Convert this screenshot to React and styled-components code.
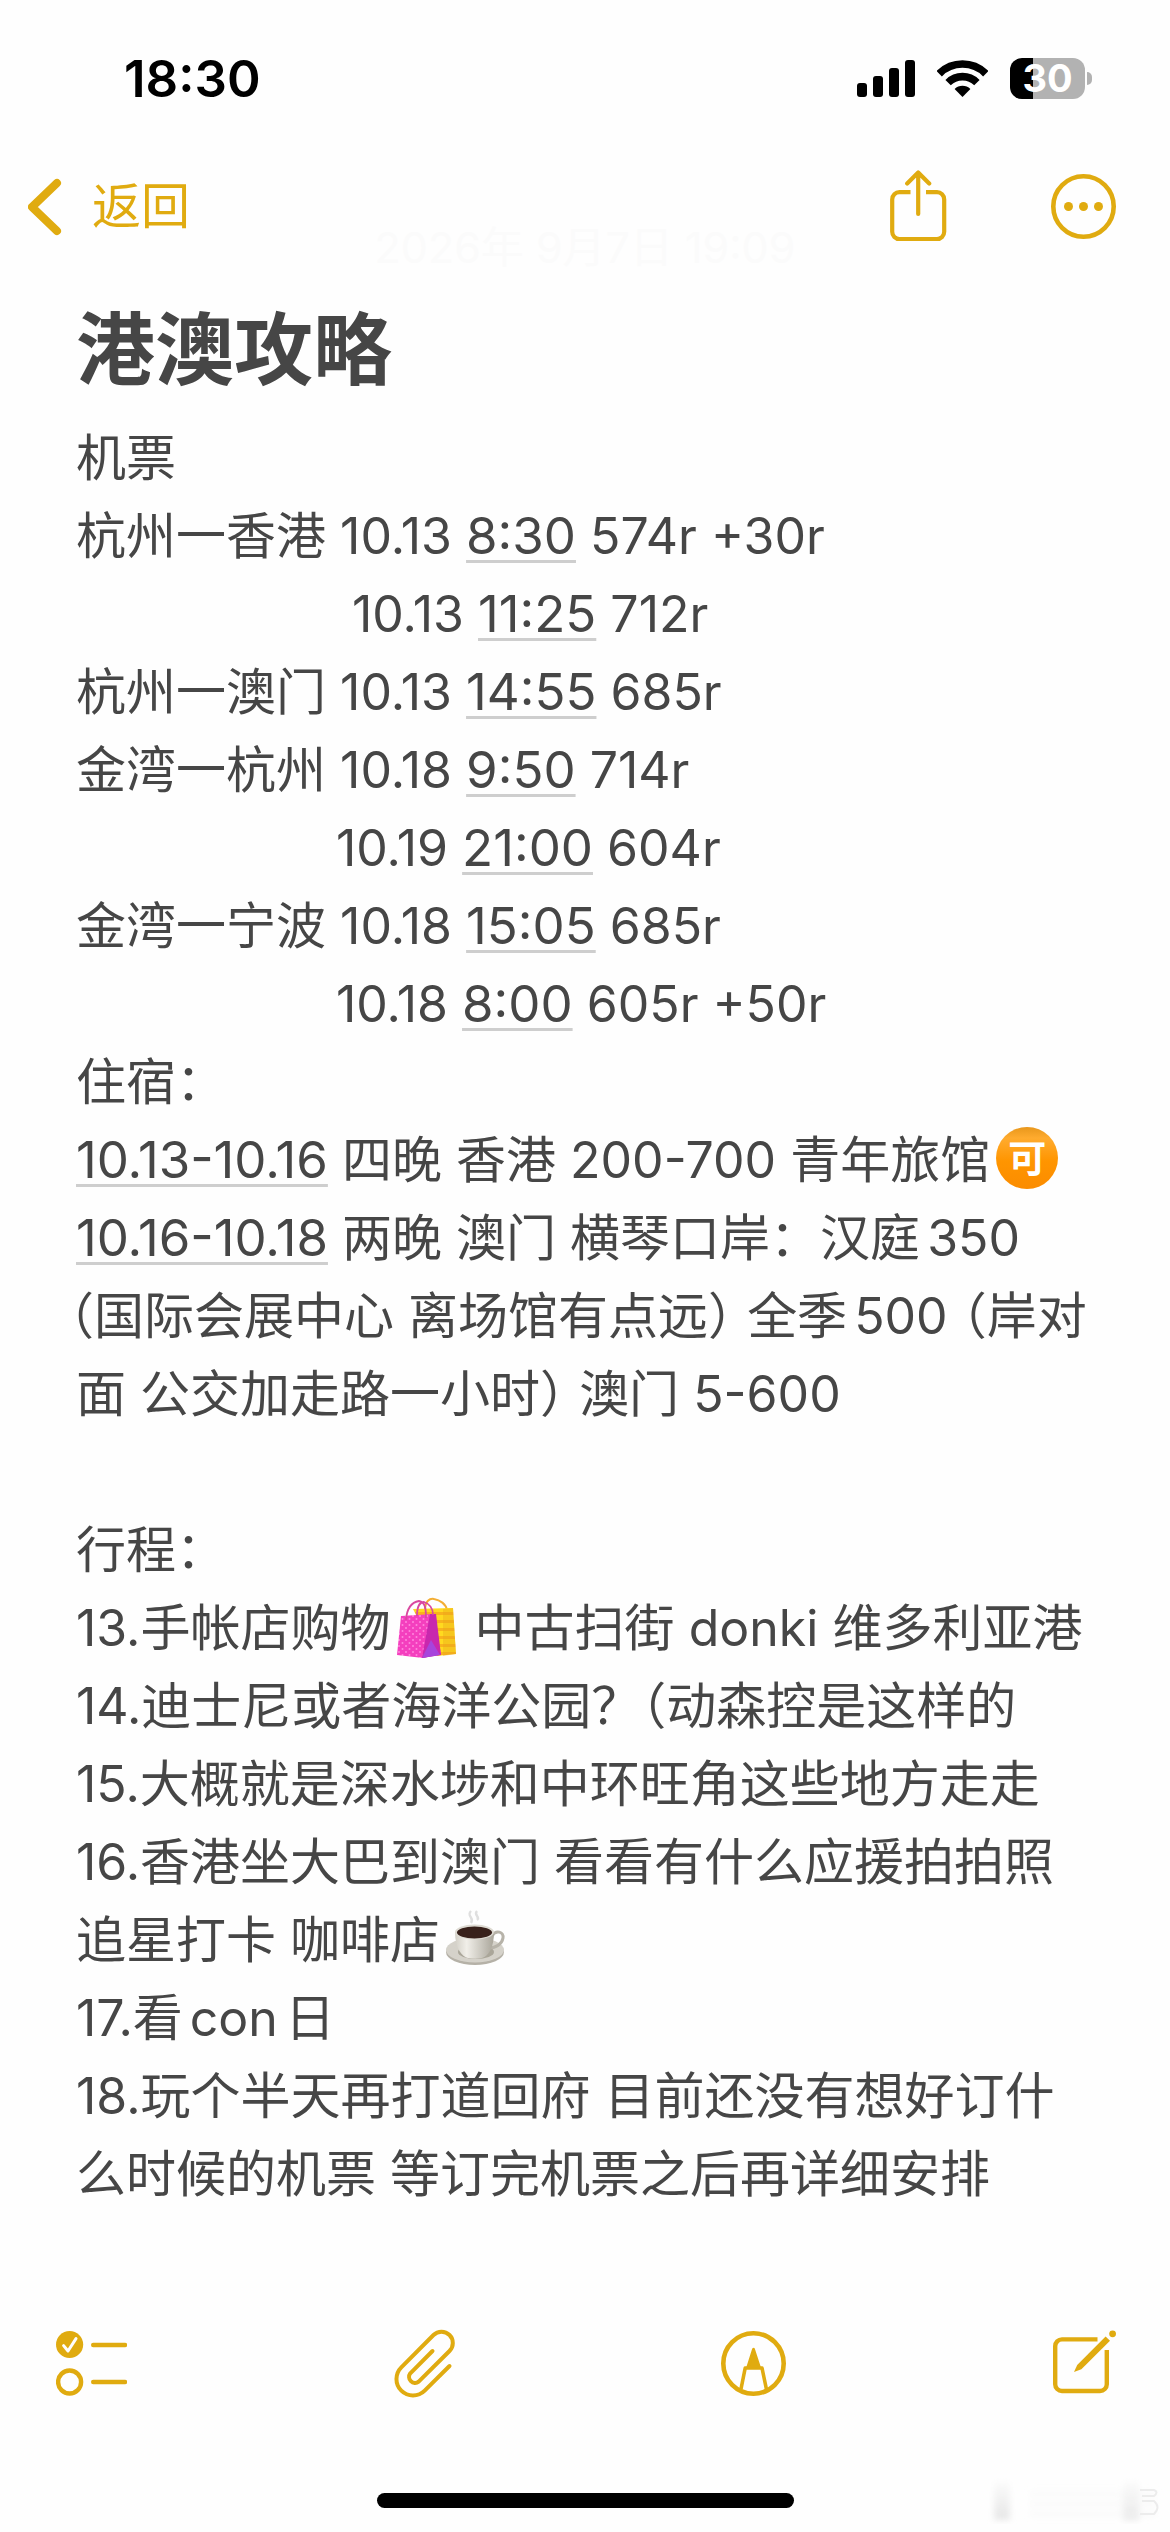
import styled, { createGlobalStyle, css } from "styled-components";

const GlobalStyle = createGlobalStyle`
    * {
        box-sizing: border-box;
    }
    body {
        margin: 0;
        background-color: #fefefe;
        font-family: Inter, "Noto Sans CJK SC", sans-serif;
    }
`
const Screen = styled.div`
    position: relative;
    display: flex;
    flex-direction: column;
    min-height: 100vh;
    color: #464646;
`
const StatusBar = styled.header`
    display: flex;
    align-items: center;
    justify-content: space-between;
    height: 156px;
    padding: 0 78px 0 124px;
    color: black;
`
const Time = styled.time`
    font-size: 51px;
    font-weight: 600;
`
const StatusIcons = styled.div`
    display: flex;
    align-items: center;
    gap: 22px;
`
const Battery = styled.span`
    position: relative;
    display: flex;
    align-items: center;
    justify-content: center;
    width: 75px;
    height: 41px;
    margin-right: 7px;
    border-radius: 12px;
    background: linear-gradient(to right, #000 23px, #b2b2b2 23px);
    color: white;
    font-size: 38px;
    font-weight: 700;
    line-height: 41px;
    &::after {
        content: "";
        position: absolute;
        right: -7px;
        top: 14px;
        width: 5px;
        height: 13px;
        border-radius: 0 5px 5px 0;
        background-color: #b2b2b2;
    }
`
const NavBar = styled.nav`
    display: flex;
    align-items: center;
    justify-content: space-between;
    padding: 18px 54px 0 28px;
`
const NavActions = styled.div`
    display: flex;
    align-items: center;
    gap: 104px;
`
const IconBtn = styled.button`
    display: flex;
    align-items: center;
    gap: ${props => props.$gap || 0}px;
    height: 66px;
    padding: 0;
    border: none;
    background: none;
    color: #e0ab10;
    font-family: inherit;
    font-size: 49px;
    line-height: 66px;
    cursor: pointer;
    svg {
        display: block;
    }
`
const EditedDate = styled.p`
    margin: -15px 0 0;
    color: #fbfbfb;
    font-size: 43px;
    line-height: 44px;
    text-align: center;
`
const Note = styled.main`
    padding: 33px 76px 40px;
`
const Title = styled.h1`
    margin: 0 0 21px;
    font-size: 79px;
    font-weight: 700;
    line-height: 96px;
`
const Line = styled.p`
    margin: 0;
    height: 78px;
    padding-left: ${props => props.$indent || 0}px;
    font-size: 50px;
    line-height: 78px;
    white-space: pre;
`
const Detected = styled.a`
    color: inherit;
    font-size: 51px;
    line-height: 1;
    text-decoration: underline;
    text-decoration-color: #cecece;
    text-decoration-thickness: 3px;
    text-underline-offset: 6px;
    text-decoration-skip-ink: none;
`
const Half = styled.span`
    margin-left: ${props => props.$tight ? "-7px" : "0"};
    font-family: "Noto Sans CJK SC", sans-serif;
    font-feature-settings: "halt";
    line-height: 1;
`
const Latin = styled.span`
    margin: 0 7px;
`
const emojiBox = css`
    margin: 0 4px 0 6px;
    vertical-align: -14px;
`
const Stamp = styled.span`
    display: inline-flex;
    align-items: center;
    justify-content: center;
    width: 62px;
    height: 62px;
    border-radius: 50%;
    background: linear-gradient(#e8971c, #ffab2e 18%, #ff9500 55%, #fb8c00);
    color: white;
    font-size: 38px;
    font-weight: 700;
    line-height: 56px;
    ${emojiBox}
    vertical-align: 6px;
`
const EmojiSvg = styled.svg`
    ${emojiBox}
`
const Footer = styled.footer`
    margin-top: auto;
    padding-bottom: 24px;
`
const Toolbar = styled.div`
    display: flex;
    align-items: center;
    justify-content: space-between;
    padding: 0 53px 97px 56px;
`
const HomeIndicator = styled.div`
    width: 417px;
    height: 15px;
    margin: 0 auto;
    border-radius: 8px;
    background-color: black;
`
const Smudge = styled.svg`
    position: absolute;
    right: 0;
    bottom: 0;
`

function Signal(){
    return (
        <svg width="58" height="38" fill="currentColor">
            <rect x="0" y="24" width="10" height="14" rx="3" />
            <rect x="16" y="17" width="10" height="21" rx="3" />
            <rect x="32" y="9" width="10" height="29" rx="3" />
            <rect x="48" y="1" width="10" height="37" rx="3" />
        </svg>
    )
}

function Wifi(){
    return (
        <svg width="51" height="38" fill="none" stroke="currentColor">
            <path d="M2.2 14.7A33 33 0 0 1 48.8 14.7" strokeWidth="7.6" />
            <path d="M11.1 23.6A20.4 20.4 0 0 1 39.9 23.6" strokeWidth="7.6" />
            <path d="M25.5 38L17.6 29.9A11.4 11.4 0 0 1 33.4 29.9Z" fill="currentColor" stroke="none" />
        </svg>
    )
}

function BackIcon(){
    return (
        <svg width="34" height="58" fill="none" stroke="currentColor" strokeWidth="8" strokeLinecap="round" strokeLinejoin="round">
            <path d="M29 5L4 29L29 53" />
        </svg>
    )
}

function ShareIcon(){
    return (
        <svg width="57" height="74" fill="none" stroke="currentColor" strokeWidth="4.2" strokeLinecap="round" strokeLinejoin="round">
            <path d="M20.5 22.2H9.5A7.2 7.2 0 0 0 2.2 29.4V61.8A7.2 7.2 0 0 0 9.5 69H47A7.2 7.2 0 0 0 54.2 61.8V29.4A7.2 7.2 0 0 0 47 22.2H36" strokeLinecap="butt" />
            <path d="M28.2 3V44M17.2 13.6L28.2 2.6L39.2 13.6" />
        </svg>
    )
}

function MoreIcon(){
    return (
        <svg width="65" height="66" fill="currentColor">
            <circle cx="32.5" cy="32.5" r="30.2" fill="none" stroke="currentColor" strokeWidth="4.6" />
            <circle cx="17.5" cy="32.5" r="4.5" />
            <circle cx="32.5" cy="32.5" r="4.5" />
            <circle cx="47.5" cy="32.5" r="4.5" />
        </svg>
    )
}

function ChecklistIcon(){
    return (
        <svg width="71" height="66" fill="none" stroke="currentColor" strokeWidth="4.4" strokeLinecap="round" strokeLinejoin="round">
            <circle cx="13.6" cy="14.5" r="13.6" fill="currentColor" stroke="none" />
            <path d="M7.6 15.6L12 21L20 8.6" stroke="#fefefe" strokeWidth="3" />
            <circle cx="13.6" cy="52" r="11.5" />
            <path d="M37.2 15H69M37.2 52H69" />
        </svg>
    )
}

function ClipIcon(){
    return (
        <svg width="61" height="70" fill="none" stroke="currentColor" strokeWidth="4" strokeLinecap="round" strokeLinejoin="round">
            <path d="M55.5 38L30.7 62.7A16.5 16.5 0 0 1 7.3 39.3L39.5 7A11.3 11.3 0 0 1 55.5 23L24.7 53.7A6 6 0 0 1 16.3 45.3L38.5 23" />
        </svg>
    )
}

function MarkupIcon(){
    return (
        <svg width="65" height="65" fill="none" stroke="currentColor">
            <circle cx="32.5" cy="32.5" r="30.2" strokeWidth="4.6" />
            <path d="M20 58L24.2 37H41L45.4 58" strokeWidth="3.6" strokeLinejoin="round" />
            <path d="M32.5 18.4L26.8 36.5H38.4Z" fill="currentColor" strokeWidth="3" strokeLinejoin="round" />
        </svg>
    )
}

function ComposeIcon(){
    return (
        <svg width="64" height="66" fill="none" stroke="currentColor">
            <path d="M44.5 9.4H9A6.8 6.8 0 0 0 2.2 16.2V54.2A6.8 6.8 0 0 0 9 61H47A6.8 6.8 0 0 0 53.8 54.2V20" strokeWidth="4.4" />
            <path d="M21 42L24.2 35L52.6 6.4L57 10.8L28.4 39.2Z" fill="currentColor" stroke="none" />
            <circle cx="59.6" cy="3.8" r="3.4" fill="currentColor" stroke="none" />
        </svg>
    )
}

function Bags(){
    return (
        <EmojiSvg width="60" height="64" viewBox="0 0 60 64" role="img" aria-label="购物袋">
            <defs>
                <pattern id="dots" width="7" height="6" patternUnits="userSpaceOnUse">
                    <rect width="7" height="6" fill="#f43fbe" />
                    <circle cx="2" cy="2" r="1" fill="#ff86dd" />
                    <circle cx="5.5" cy="5" r="1" fill="#ff86dd" />
                </pattern>
                <pattern id="stripes" width="8" height="8" patternUnits="userSpaceOnUse">
                    <rect width="8" height="8" fill="#ffd91f" />
                    <rect width="8" height="3" fill="#f9b21c" />
                </pattern>
            </defs>
            <path d="M28 14C28 5 33 2 37 3C43 4 49 8 50 14" fill="none" stroke="#f3ae35" strokeWidth="2" />
            <path d="M16 13L56 12L59 58L40 60Z" fill="url(#stripes)" />
            <path d="M46 13L56 12L59 58L46 60Z" fill="#e5a21b" opacity="0.35" />
            <path d="M4 20L36 18L44 58L26 62L0 59Z" fill="url(#dots)" />
            <path d="M33 18L39 18L44 59L25 62Z" fill="#c828ae" />
            <path d="M34 44L43 59L25 62Z" fill="#a744dc" />
            <path d="M9 24C10 10 16 6 22 5C28 6 29 12 29 22M20 20C20 10 23 6 27 6C33 8 36 12 36 19" fill="none" stroke="#d9489f" strokeWidth="1.8" />
        </EmojiSvg>
    )
}

function Coffee(){
    return (
        <EmojiSvg width="60" height="64" viewBox="0 0 60 64" role="img" aria-label="咖啡">
            <defs>
                <linearGradient id="cup">
                    <stop offset="0" stopColor="#d3d0c7" />
                    <stop offset="0.3" stopColor="#f1efe9" />
                    <stop offset="1" stopColor="#a9a59a" />
                </linearGradient>
            </defs>
            <ellipse cx="29" cy="44" rx="29" ry="13" fill="#b5b1a7" />
            <ellipse cx="29" cy="42" rx="29" ry="12.5" fill="#d5d2ca" />
            <ellipse cx="30" cy="44" rx="18" ry="7" fill="#aaa699" />
            <path d="M46 28C50 21 58 24 57 30C56 36 50 40 43 40" fill="none" stroke="#b7b3a9" strokeWidth="3" />
            <path d="M9 24C9 40 16 49 22 50C27 51 32 51 36 50C43 48 48 39 48 24Z" fill="url(#cup)" />
            <ellipse cx="28.5" cy="24" rx="19.5" ry="7.5" fill="#dedbd3" />
            <ellipse cx="28.5" cy="24.5" rx="17.5" ry="6" fill="#38211b" />
            <path d="M25 15C29 10 20 8 25 3M31 12C35 9 27 7 31 3" fill="none" stroke="#c9c9c9" strokeWidth="2.4" opacity="0.6" />
        </EmojiSvg>
    )
}

function App(){
    return (
        <>
            <GlobalStyle />
            <Screen>
                <StatusBar>
                    <Time>18:30</Time>
                    <StatusIcons>
                        <Signal />
                        <Wifi />
                        <Battery>30</Battery>
                    </StatusIcons>
                </StatusBar>
                <NavBar>
                    <IconBtn $gap={30}>
                        <BackIcon />
                        返回
                    </IconBtn>
                    <NavActions>
                        <IconBtn aria-label="共享"><ShareIcon /></IconBtn>
                        <IconBtn aria-label="更多"><MoreIcon /></IconBtn>
                    </NavActions>
                </NavBar>
                <EditedDate>2026年 9月7日 19:09</EditedDate>
                <Note>
                    <Title>港澳攻略</Title>
                    <Line>机票</Line>
                    <Line>杭州一香港 10.13 <Detected href="#">8:30</Detected> 574r +30r</Line>
                    <Line $indent={276}>10.13 <Detected href="#">11:25</Detected> 712r</Line>
                    <Line>杭州一澳门 10.13 <Detected href="#">14:55</Detected> 685r</Line>
                    <Line>金湾一杭州 10.18 <Detected href="#">9:50</Detected> 714r</Line>
                    <Line $indent={260}>10.19 <Detected href="#">21:00</Detected> 604r</Line>
                    <Line>金湾一宁波 10.18 <Detected href="#">15:05</Detected> 685r</Line>
                    <Line $indent={260}>10.18 <Detected href="#">8:00</Detected> 605r +50r</Line>
                    <Line>住宿：</Line>
                    <Line><Detected href="#">10.13-10.16</Detected> 四晚 香港 200-700 青年旅馆<Stamp>可</Stamp></Line>
                    <Line><Detected href="#">10.16-10.18</Detected> 两晚 澳门 横琴口岸：汉庭<Latin>350</Latin></Line>
                    <Line><Half $tight>（</Half>国际会展中心 离场馆有点远<Half>）</Half> 全季<Latin>500</Latin> <Half $tight>（</Half>岸对</Line>
                    <Line>面 公交加走路一小时<Half>）</Half> 澳门 5-600</Line>
                    <Line />
                    <Line>行程：</Line>
                    <Line>13.手帐店购物<Bags /> 中古扫街 donki 维多利亚港</Line>
                    <Line>14.迪士尼或者海洋公园？<Half>（</Half>动森控是这样的</Line>
                    <Line>15.大概就是深水埗和中环旺角这些地方走走</Line>
                    <Line>16.香港坐大巴到澳门 看看有什么应援拍拍照</Line>
                    <Line>追星打卡 咖啡店<Coffee /></Line>
                    <Line>17.看<Latin>con</Latin>日</Line>
                    <Line>18.玩个半天再打道回府 目前还没有想好订什</Line>
                    <Line>么时候的机票 等订完机票之后再详细安排</Line>
                </Note>
                <Footer>
                    <Toolbar>
                        <IconBtn aria-label="核对清单"><ChecklistIcon /></IconBtn>
                        <IconBtn aria-label="附件"><ClipIcon /></IconBtn>
                        <IconBtn aria-label="标记"><MarkupIcon /></IconBtn>
                        <IconBtn aria-label="新建备忘录"><ComposeIcon /></IconBtn>
                    </Toolbar>
                    <HomeIndicator />
                </Footer>
                <Smudge width="190" height="62" aria-hidden="true">
                    <defs>
                        <filter id="soft"><feGaussianBlur stdDeviation="3" /></filter>
                        <linearGradient id="fade" x2="0" y2="1">
                            <stop offset="0" stopColor="#fbfbfb" />
                            <stop offset="1" stopColor="#e6e6e6" />
                        </linearGradient>
                    </defs>
                    <g filter="url(#soft)">
                        <rect x="14" y="12" width="16" height="38" fill="url(#fade)" />
                        <rect x="143" y="12" width="16" height="38" fill="url(#fade)" />
                        <path d="M50 24H176M50 34H176M50 44H176" stroke="#f6f6f6" strokeWidth="3" />
                    </g>
                    <path d="M160 20H174Q179 22 174 26H162M162 31H174Q181 37 174 44H160" fill="none" stroke="#ececec" strokeWidth="2" />
                </Smudge>
            </Screen>
        </>
    )
}
export default App;
